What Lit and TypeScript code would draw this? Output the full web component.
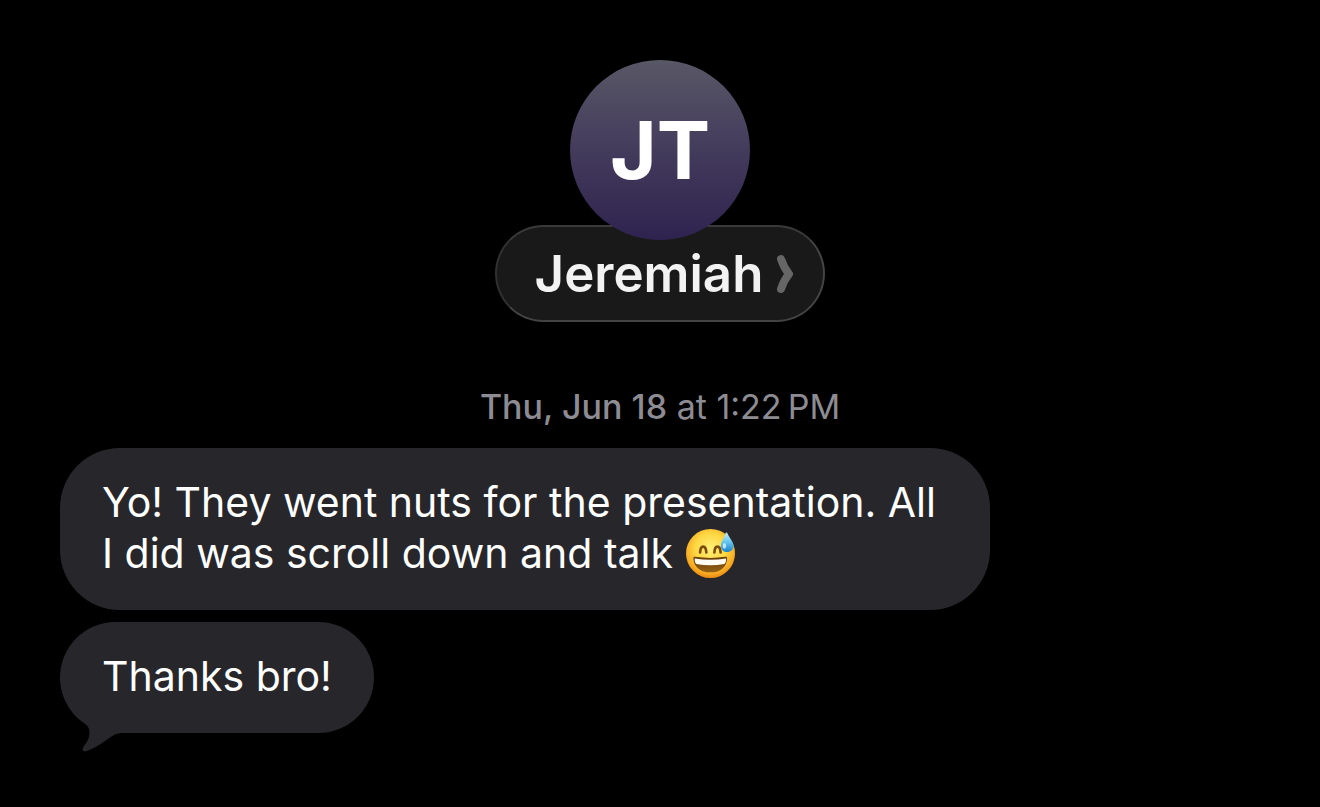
import { LitElement, html, css, svg } from "lit";
import { customElement, property } from "lit/decorators.js";

const sweatSmile = html`<svg class="emoji" viewBox="0 0 48 48" role="img" aria-label="grinning face with sweat">
  ${svg`
  <defs>
    <radialGradient id="face" cx="0.5" cy="0.4" r="0.62">
      <stop offset="0" stop-color="#fff07a" />
      <stop offset="0.5" stop-color="#fed842" />
      <stop offset="0.8" stop-color="#f9ae25" />
      <stop offset="1" stop-color="#e8850f" />
    </radialGradient>
    <linearGradient id="mouth" x1="0" y1="0" x2="0" y2="1">
      <stop offset="0" stop-color="#6a3d08" />
      <stop offset="1" stop-color="#936016" />
    </linearGradient>
    <linearGradient id="drop" x1="0" y1="0" x2="0" y2="1">
      <stop offset="0" stop-color="#c3ecfb" />
      <stop offset="0.5" stop-color="#62c4ee" />
      <stop offset="1" stop-color="#1783cf" />
    </linearGradient>
  </defs>
  <circle cx="24" cy="24" r="24" fill="url(#face)" />
  <path d="M13.800 23c.2-4 1.300-5.800 3-5.800s2.900 1.800 3.100 5.800M27.800 23c.2-4 1.300-5.800 3-5.800s2.900 1.800 3.100 5.800" fill="none" stroke="#7c4a0a" stroke-width="2.600" stroke-linecap="round" />
  <path d="M7.200 28.800C7.500 37 14 42.400 24 42.400s16-5.400 16.300-13.600c0-1.200-.7-1.700-1.800-1.500-9.500 1.400-20 1.400-29.500 0-1.100-.2-1.800.3-1.800 1.500z" fill="url(#mouth)" />
  <path d="M8.500 28.800c10.300 1.700 20.500 1.700 30.800 0 .1 2.600-.6 4.600-1.800 5.400-8.800 1.700-18.500 1.700-27.300 0-1.200-.8-1.800-2.800-1.700-5.400z" fill="#fffdf4" />
  <path d="M39.600 3.400c.5 0 .9.400 1.100 1 1.500 4.200 5.800 7.700 5.800 12.300 0 3.700-2.800 5.900-6.100 5.900s-6.200-2.300-6.200-6c0-4.600 3.500-8.100 4.400-12.200.1-.6.500-1 1-1z" fill="url(#drop)" />
  <ellipse cx="37.600" cy="16.500" rx="1.700" ry="2.800" fill="#e6f8ff" opacity="0.75" />
  `}
</svg>`;

@customElement("message-bubble")
export class MessageBubble extends LitElement {
  @property({ type: Boolean }) tail = false;

  static styles = css`
    :host {
      display: block;
      position: relative;
      box-sizing: border-box;
      width: fit-content;
      max-width: min(100%, 930px);
      padding: 29px 42px 31px;
      border-radius: 60px;
      background: #27262b;
      color: #fff;
      font-size: 41px;
      line-height: 51px;
    }
    .text {
      margin: 0;
    }
    .tail {
      position: absolute;
      left: 16px;
      bottom: -20px;
      width: 52px;
      height: 36px;
      fill: #27262b;
    }
  `;

  render() {
    return html`
      <p class="text"><slot></slot></p>
      ${this.tail
        ? html`<svg class="tail" viewBox="0 0 52 36" aria-hidden="true">
            <path d="M2 0C7 5 13.500 8.500 13.500 15c0 6-2 9.500-5.500 14-2.500 3.500-1.500 6.200 2.500 5C22 30.500 32 21 38 18c3-1.500 5-2 10-2L52 0z" />
          </svg>`
        : null}
    `;
  }
}

@customElement("app-root")
export class AppRoot extends LitElement {
  static styles = css`
    :host {
      display: block;
      box-sizing: border-box;
      min-height: 100vh;
      padding: 60px;
      background: #000;
      font-family: Inter, "Liberation Sans", sans-serif;
    }
    .contact {
      display: flex;
      flex-direction: column;
      align-items: center;
    }
    .avatar {
      display: grid;
      place-items: center;
      width: 180px;
      height: 180px;
      border-radius: 50%;
      background: linear-gradient(#585765, #4a4460 35%, #41395a 55%, #2e234f);
      color: #fff;
      font-size: 80px;
      font-weight: 700;
      line-height: 100px;
      z-index: 1;
    }
    .name {
      display: flex;
      align-items: center;
      gap: 13px;
      box-sizing: border-box;
      height: 97px;
      margin: -15px 0 0;
      padding: 0 29px 0 38px;
      border: 2px solid #343434;
      border-color: #3a3a3a #444 #444 #303030;
      border-radius: 49px;
      background: #191919;
      color: #f2f2f2;
      font: inherit;
      font-size: 51px;
      font-weight: 600;
      line-height: 60px;
    }
    .chevron {
      width: 18px;
      height: 40px;
      fill: none;
      stroke: #666;
      stroke-width: 8px;
      stroke-linecap: round;
      stroke-linejoin: round;
    }
    .stamp {
      display: block;
      margin: 65px 0 21px;
      color: #8d8c92;
      font-size: 34px;
      line-height: 40px;
      text-align: center;
    }
    .day {
      font-weight: 500;
    }
    .thread {
      display: flex;
      flex-direction: column;
      gap: 12px;
    }
    .emoji {
      width: 49px;
      height: 49px;
      margin: -4px 1px;
      vertical-align: -6px;
    }
  `;

  render() {
    return html`
      <header class="contact">
        <div class="avatar">JT</div>
        <button class="name" type="button">
          Jeremiah
          <svg class="chevron" viewBox="0 0 18 40" aria-hidden="true">
            <path d="M5 5Q8 14 13 20Q8 26 5 35" />
          </svg>
        </button>
      </header>
      <time class="stamp"><span class="day">Thu, Jun 18</span> at 1:22&#8239;PM</time>
      <main class="thread">
        <message-bubble>Yo! They went nuts for the presentation. All I did was scroll down and talk ${sweatSmile}</message-bubble>
        <message-bubble tail>Thanks bro!</message-bubble>
      </main>
    `;
  }
}
